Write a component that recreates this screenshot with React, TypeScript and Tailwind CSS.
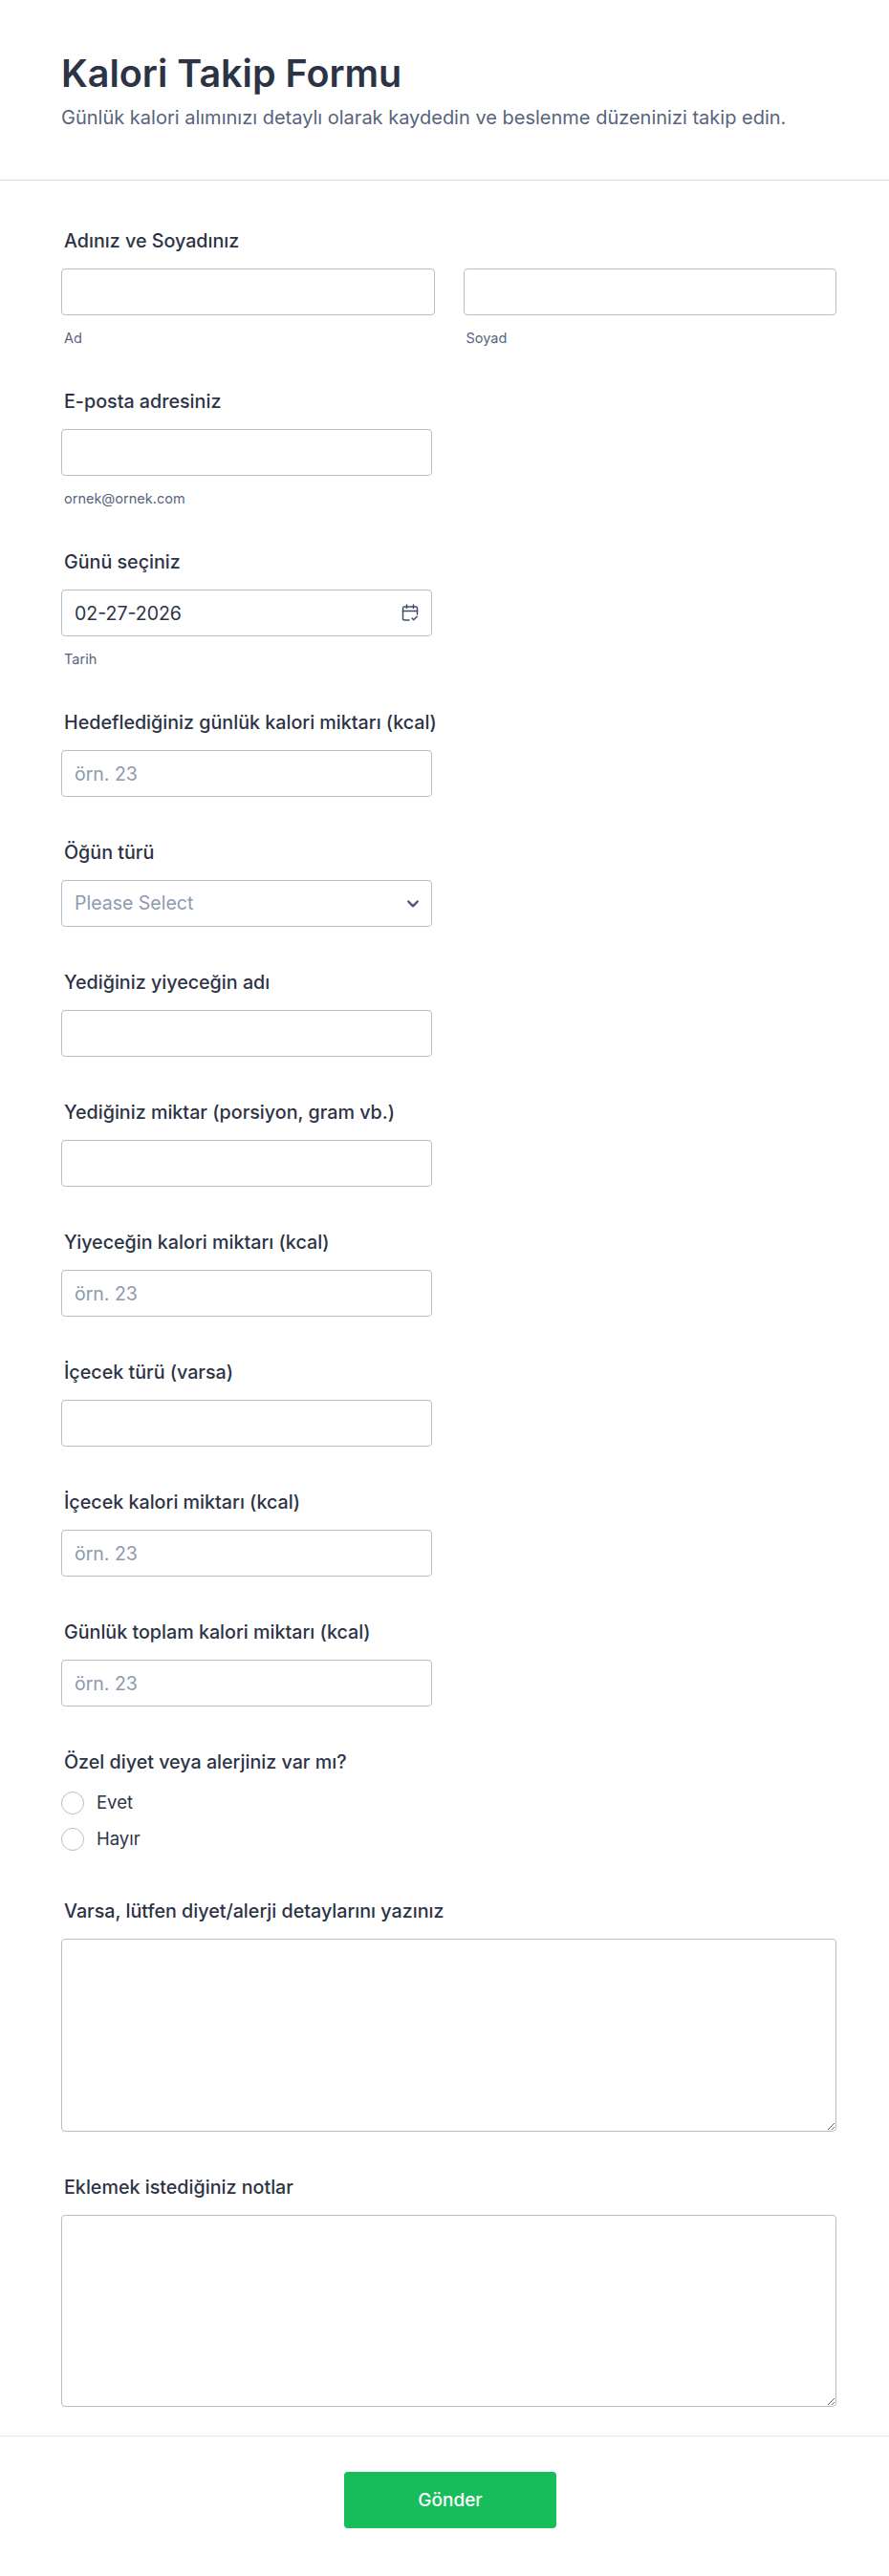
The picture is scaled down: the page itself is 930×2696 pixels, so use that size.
const inputClass =
  'block w-full h-[49px] rounded border border-[#b8bdc9] bg-white px-[13px] text-[19.5px] text-[#2c3345] placeholder:text-[#8d9ab0] outline-none'

const labelClass = 'block h-6 pl-[3px] text-[19.7px] leading-6 font-medium whitespace-nowrap text-[#2c3345]'

function Label({ children }: { children: React.ReactNode }) {
  return <label className={`${labelClass} mb-[17px]`}>{children}</label>
}

function SubLabel({ children }: { children: React.ReactNode }) {
  return <span className="block mt-[14px] -mb-[2px] pl-[3px] text-[14.5px] leading-5 text-[#57647e]">{children}</span>
}

function CalendarIcon() {
  return (
    <svg width="18" height="18" viewBox="0 0 18 18" fill="none" stroke="#414c66" strokeWidth="1.5" strokeLinecap="round" strokeLinejoin="round">
      <path d="M8 17H3A1.5 1.5 0 0 1 1.5 15.5V4.5A1.5 1.5 0 0 1 3 3h12A1.5 1.5 0 0 1 16.5 4.5V11" />
      <path d="M1.5 7.5h15M5.5 1v3.5M12.5 1v3.5" />
      <path d="M11 15l1.7 1.7 3.5-3.4" />
    </svg>
  )
}

function Field({ label, placeholder, type = 'text' }: { label: string; placeholder?: string; type?: string }) {
  return (
    <div className="w-[388px]">
      <Label>{label}</Label>
      <input type={type} placeholder={placeholder} className={inputClass} />
    </div>
  )
}

function Area({ label }: { label: string }) {
  return (
    <div>
      <Label>{label}</Label>
      <textarea className="block w-full h-[201.5px] rounded border border-[#b8bdc9] bg-white px-3 py-2 outline-none" />
    </div>
  )
}

function Radio({ label }: { label: string }) {
  return (
    <label className="flex items-center h-6 gap-[13px] text-[18.5px] text-[#2c3345]">
      <span className="w-6 h-6 rounded-full border border-[#b8bdc9] bg-white" />
      {label}
    </label>
  )
}

export default function App() {
  return (
    <div className="w-[930px] bg-white font-['Inter',sans-serif]">
      <header className="h-[189px] border-b border-[#d8dae9] pt-[50px] pl-16">
        <h1 className="text-[39.5px] leading-[54px] font-semibold text-[#2c3345]">Kalori Takip Formu</h1>
        <p className="mt-[5px] text-xl leading-7 text-[#57647e]">Günlük kalori alımınızı detaylı olarak kaydedin ve beslenme düzeninizi takip edin.</p>
      </header>

      <form className="flex flex-col gap-[46px] pl-16 pr-[55px] pt-[51px] pb-[30px]">
        <div>
          <Label>Adınız ve Soyadınız</Label>
          <div className="grid grid-cols-2 gap-[30px]">
            <div>
              <input className={inputClass} />
              <SubLabel>Ad</SubLabel>
            </div>
            <div>
              <input className={inputClass} />
              <SubLabel>Soyad</SubLabel>
            </div>
          </div>
        </div>

        <div className="w-[388px]">
          <Label>E-posta adresiniz</Label>
          <input type="email" className={inputClass} />
          <SubLabel>ornek@ornek.com</SubLabel>
        </div>

        <div className="w-[388px]">
          <Label>Günü seçiniz</Label>
          <div className="relative">
            <input defaultValue="02-27-2026" className={inputClass} />
            <span className="absolute right-[14px] top-[15px]">
              <CalendarIcon />
            </span>
          </div>
          <SubLabel>Tarih</SubLabel>
        </div>

        <Field label="Hedeflediğiniz günlük kalori miktarı (kcal)" placeholder="örn. 23" />

        <div className="w-[388px]">
          <Label>Öğün türü</Label>
          <div className="relative">
            <div className="flex items-center h-[49px] rounded border border-[#b8bdc9] bg-white px-[13px] text-[19.5px] text-[#8d9ab0]">Please Select</div>
            <svg className="absolute right-[14px] top-[21px]" width="12" height="8" viewBox="0 0 12 8" fill="none" stroke="#4c5a7a" strokeWidth="2.4" strokeLinecap="round" strokeLinejoin="round">
              <path d="M1.2 1.5L6 6.3l4.8-4.8" />
            </svg>
          </div>
        </div>

        <Field label="Yediğiniz yiyeceğin adı" />
        <Field label="Yediğiniz miktar (porsiyon, gram vb.)" />
        <Field label="Yiyeceğin kalori miktarı (kcal)" placeholder="örn. 23" />
        <Field label="İçecek türü (varsa)" />
        <Field label="İçecek kalori miktarı (kcal)" placeholder="örn. 23" />
        <Field label="Günlük toplam kalori miktarı (kcal)" placeholder="örn. 23" />

        <div className="pb-[5px]">
          <label className={`${labelClass} mb-[19px]`}>Özel diyet veya alerjiniz var mı?</label>
          <div className="flex flex-col gap-[14px]">
            <Radio label="Evet" />
            <Radio label="Hayır" />
          </div>
        </div>

        <Area label="Varsa, lütfen diyet/alerji detaylarını yazınız" />
        <Area label="Eklemek istediğiniz notlar" />
      </form>

      <footer className="flex justify-center border-t border-[#e3e5f0] pl-3 pt-[37px] pb-[50px]">
        <button type="button" className="w-[222px] h-[59px] pt-[1px] rounded bg-[#18bd5b] text-[19px] font-medium text-white">Gönder</button>
      </footer>
    </div>
  )
}
